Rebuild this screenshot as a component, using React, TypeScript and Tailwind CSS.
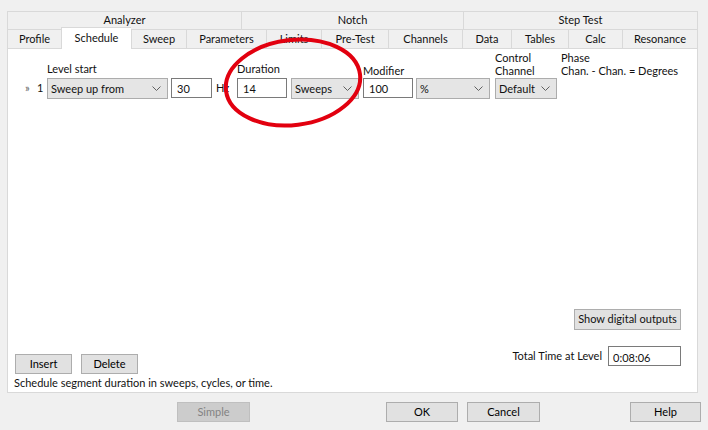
import React from "react";

const Chevron = () => (
  <svg width="9" height="5" viewBox="0 0 9 5" className="shrink-0">
    <path d="M0.5 0.5 L4.5 4.5 L8.5 0.5" fill="none" stroke="#606060" strokeWidth="1" />
  </svg>
);

function Combo({ value, width }: { value: string; width: string }) {
  return (
    <div className={`${width} h-[21px] flex items-center justify-between bg-[#e5e5e5] border border-[#acacac] pl-[3px] pr-[6px]`}>
      <span className="leading-none">{value}</span>
      <Chevron />
    </div>
  );
}

function TextBox({ value, width }: { value: string; width: string }) {
  return (
    <div className={`${width} h-[20px] mb-[1px] flex items-center bg-white border border-[#7a7a7a] pl-[5px]`}>
      <span className="leading-none">{value}</span>
    </div>
  );
}

function Btn({ label, width, disabled }: { label: string; width: string; disabled?: boolean }) {
  return (
    <div
      className={`${width} h-[20px] flex items-center justify-center border ${
        disabled ? "bg-[#cccccc] border-[#bfbfbf] text-[#838383]" : "bg-[#e1e1e1] border-[#adadad] text-black"
      }`}
    >
      {label}
    </div>
  );
}

const topTabs = [
  { label: "Analyzer", w: "w-[234px]" },
  { label: "Notch", w: "w-[222px]" },
  { label: "Step Test", w: "flex-1" },
];

const tabs = [
  { label: "Profile", w: "w-[54px]" },
  { label: "Schedule", w: "w-[70px]", active: true },
  { label: "Sweep", w: "w-[55px]" },
  { label: "Parameters", w: "w-[80px]" },
  { label: "Limits", w: "w-[55px]" },
  { label: "Pre-Test", w: "w-[67px]" },
  { label: "Channels", w: "w-[74px]" },
  { label: "Data", w: "w-[49px]" },
  { label: "Tables", w: "w-[57px]" },
  { label: "Calc", w: "w-[54px]" },
  { label: "Resonance", w: "flex-1" },
];

export default function App() {
  return (
    <div className="w-[708px] h-[430px] bg-[#f0f0f0] relative overflow-hidden font-['Lato',sans-serif] text-[11px] text-[#111] whitespace-nowrap">
      <div className="pt-[11px] pl-[7px] pr-[10px]">
        {/* group row */}
        <div className="flex h-[18px]">
          {topTabs.map((t, i) => (
            <div
              key={t.label}
              className={`${t.w} h-full border-t border-l border-[#d9d9d9] ${i === topTabs.length - 1 ? "border-r" : ""} flex items-center justify-center`}
            >
              {t.label}
            </div>
          ))}
        </div>

        {/* tab row */}
        <div className="flex h-[19px]">
          {tabs.map((t, i) =>
            t.active ? (
              <div
                key={t.label}
                className={`${t.w} h-[22px] -mt-[2px] relative z-10 bg-white border-t border-l border-[#d9d9d9] flex items-center justify-center pb-[1px]`}
              >
                {t.label}
              </div>
            ) : (
              <div
                key={t.label}
                className={`${t.w} h-full border-t border-l border-[#d9d9d9] ${i === tabs.length - 1 ? "border-r" : ""} flex items-center justify-center`}
              >
                {t.label}
              </div>
            )
          )}
        </div>

        {/* Schedule panel */}
        <div className="h-[345px] bg-white border border-[#d9d9d9] flex flex-col">
          <div className="flex items-end pl-[17px] mt-[2px]">
            <div className="w-[22px] h-[21px] flex items-center">
              <span className="text-[#606060] w-[12px]">»</span>
              <span>1</span>
            </div>

            <div className="flex flex-col">
              <span className="leading-[13px] mb-[3px]">Level start</span>
              <Combo value="Sweep up from" width="w-[121px]" />
            </div>

            <div className="ml-[3px]">
              <TextBox value="30" width="w-[41px]" />
            </div>
            <div className="w-[25px] h-[21px] pl-[4px] flex items-center">Hz</div>

            <div className="flex flex-col">
              <span className="leading-[13px] mb-[3px]">Duration</span>
              <div className="flex items-end">
                <TextBox value="14" width="w-[50px]" />
                <div className="ml-[4px]">
                  <Combo value="Sweeps" width="w-[68px]" />
                </div>
              </div>
            </div>

            <div className="flex flex-col ml-[4px]">
              <span className="leading-[13px] mb-[1px]">Modifier</span>
              <div className="flex items-end">
                <TextBox value="100" width="w-[50px]" />
                <div className="ml-[3px]">
                  <Combo value="%" width="w-[74px]" />
                </div>
              </div>
            </div>

            <div className="flex flex-col ml-[5px]">
              <span className="leading-[13px] mb-[1px]">
                Control
                <br />
                Channel
              </span>
              <Combo value="Default" width="w-[62px]" />
            </div>

            <div className="self-start ml-[4px] leading-[13px]">
              Phase
              <br />
              Chan. - Chan. = Degrees
            </div>
          </div>

          <div className="flex-1" />

          <div className="flex justify-end pr-[16px]">
            <div className="w-[107px] h-[21px] flex items-center justify-center bg-[#e1e1e1] border border-[#adadad]">
              Show digital outputs
            </div>
          </div>

          <div className="flex justify-between items-end mt-[16px]">
            <div className="flex flex-col pb-[2px]">
              <div className="flex pl-[7px] gap-[9px]">
                <Btn label="Insert" width="w-[57px]" />
                <Btn label="Delete" width="w-[57px]" />
              </div>
              <span className="pl-[6px] leading-[15px] mt-[1px]">
                Schedule segment duration in sweeps, cycles, or time.
              </span>
            </div>

            <div className="flex items-center pr-[16px] mb-[26px]">
              <span>Total Time at Level</span>
              <div className="ml-[6px] w-[73px] h-[20px] bg-white border border-[#7a7a7a] pl-[4px] pt-[2px] flex items-center">
                <span className="leading-none">0:08:06</span>
              </div>
            </div>
          </div>
        </div>
      </div>

      {/* dialog buttons */}
      <div className="flex mt-[9px]">
        <div className="ml-[177px]">
          <Btn label="Simple" width="w-[73px]" disabled />
        </div>
        <div className="ml-[136px]">
          <Btn label="OK" width="w-[72px]" />
        </div>
        <div className="ml-[9px]">
          <Btn label="Cancel" width="w-[73px]" />
        </div>
        <div className="ml-[90px]">
          <Btn label="Help" width="w-[71px]" />
        </div>
      </div>

      {/* red annotation ellipse */}
      <svg className="absolute top-0 left-0 pointer-events-none" width="708" height="430" viewBox="0 0 708 430">
        <ellipse
          cx="293"
          cy="82.5"
          rx="67.5"
          ry="42.5"
          fill="none"
          stroke="#e2000f"
          strokeWidth="4"
          transform="rotate(-7 293 82.5)"
        />
      </svg>
    </div>
  );
}
